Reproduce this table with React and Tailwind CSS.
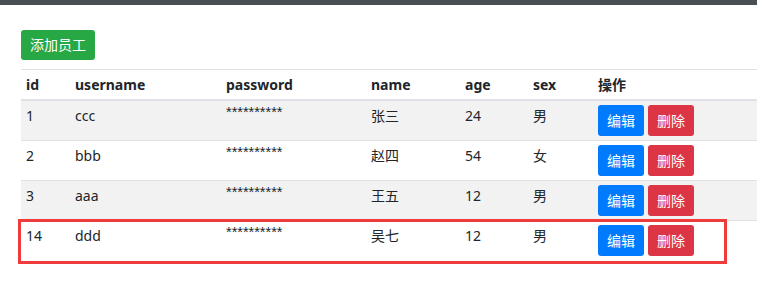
import React from "react";

const employees = [
  { id: 1, username: "ccc", name: "张三", age: 24, sex: "男" },
  { id: 2, username: "bbb", name: "赵四", age: 54, sex: "女" },
  { id: 3, username: "aaa", name: "王五", age: 12, sex: "男" },
  { id: 14, username: "ddd", name: "吴七", age: 12, sex: "男" },
];

export default function App() {
  return (
    <div
      className="relative min-h-screen bg-white text-[#212529] text-[14px]"
      style={{ fontFamily: '"Noto Sans", "Noto Sans CJK SC", sans-serif' }}
    >
      {/* top bar */}
      <div className="h-[5px] bg-[#4a4f54]" />

      <div className="pl-[21px] pt-[25px]">
        <button className="h-[30px] px-[9px] rounded-[3px] bg-[#28a745] text-white text-[14px] leading-[30px]">
          添加员工
        </button>

        <table className="mt-[9px] w-full table-fixed border-collapse text-left">
          <thead>
            <tr className="border-t border-[#dee2e6] border-b-2">
              <th className="w-[49px] pl-[5px] py-[4px] leading-[21px] font-bold">id</th>
              <th className="w-[151px] pl-[5px] py-[4px] leading-[21px] font-bold">username</th>
              <th className="w-[145px] pl-[5px] py-[4px] leading-[21px] font-bold">password</th>
              <th className="w-[94px] pl-[5px] py-[4px] leading-[21px] font-bold">name</th>
              <th className="w-[68px] pl-[5px] py-[4px] leading-[21px] font-bold">age</th>
              <th className="w-[65px] pl-[5px] py-[4px] leading-[21px] font-bold">sex</th>
              <th className="pl-[5px] py-[4px] leading-[21px] font-bold">操作</th>
            </tr>
          </thead>
          <tbody>
            {employees.map((e, i) => (
              <tr
                key={e.id}
                className={
                  (i > 0 ? "border-t border-[#dee2e6] " : "") +
                  (i % 2 === 0 ? "bg-[#f2f2f2]" : "bg-white")
                }
              >
                <td className="pl-[5px] py-[4px] align-top leading-[21px]">{e.id}</td>
                <td className="pl-[5px] py-[4px] align-top leading-[21px]">{e.username}</td>
                <td className="pl-[5px] pt-[1px] pb-[4px] align-top leading-[21px] text-[14.5px] font-['Liberation_Sans',sans-serif]">
                  **********
                </td>
                <td className="pl-[5px] py-[4px] align-top leading-[21px]">{e.name}</td>
                <td className="pl-[5px] py-[4px] align-top leading-[21px]">{e.age}</td>
                <td className="pl-[5px] py-[4px] align-top leading-[21px]">{e.sex}</td>
                <td className="pl-[5px] py-[4px] align-top">
                  <div className="flex gap-[4px]">
                    <button className="h-[31px] w-[46px] rounded-[3px] bg-[#007bff] text-white text-[14px]">
                      编辑
                    </button>
                    <button className="h-[31px] w-[46px] rounded-[3px] bg-[#dc3545] text-white text-[14px]">
                      删除
                    </button>
                  </div>
                </td>
              </tr>
            ))}
          </tbody>
        </table>
      </div>

      {/* annotation box around the last row */}
      <div className="absolute left-[18px] top-[219px] w-[709px] h-[45px] border-[3px] border-[#ef3b3b]" />
    </div>
  );
}
